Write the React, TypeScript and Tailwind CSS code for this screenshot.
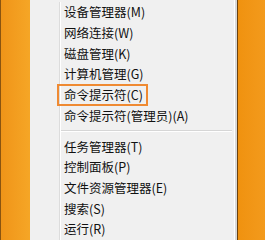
const items = [
  '设备管理器(M)',
  '网络连接(W)',
  '磁盘管理(K)',
  '计算机管理(G)',
  '命令提示符(C)',
  '命令提示符(管理员)(A)',
];

const items2 = ['任务管理器(T)', '控制面板(P)', '文件资源管理器(E)', '搜索(S)', '运行(R)'];

function Row({ label, boxed }: { label: string; boxed?: boolean }) {
  return (
    <div className="relative flex h-[21.5px] items-center">
      <div className="w-[29px] shrink-0" />
      <div className="h-full w-px bg-[#dcdcdc]" />
      <div className="h-full w-px bg-white" />
      <span className="pl-[3px] text-[12.5px] leading-none text-[#111] whitespace-nowrap">{label}</span>
      {boxed && (
        <div className="absolute left-[27px] top-[-1px] h-[22px] w-[91px] border-2 border-[#ef8a32]" />
      )}
    </div>
  );
}

export default function App() {
  return (
    <div
      className="flex h-[240px] w-[265px] overflow-hidden"
      style={{ fontFamily: '"Noto Sans CJK SC", "Noto Sans", sans-serif' }}
    >
      <div className="flex w-[30px] shrink-0">
        <div className="w-px bg-[#8a5410]" />
        <div className="flex-1 bg-gradient-to-r from-[#f09418] to-[#f5a626]" />
      </div>

      <div className="flex w-[204px] shrink-0 flex-col bg-[#f0f0f0] pt-[2px]">
        {items.map((t) => (
          <Row key={t} label={t} boxed={t === '命令提示符(C)'} />
        ))}
        <div className="flex h-[10.5px] items-center">
          <div className="w-[29px] shrink-0" />
          <div className="h-full w-px bg-[#dcdcdc]" />
          <div className="h-full w-px bg-white" />
          <div className="flex flex-1 flex-col pr-[2px]">
            <div className="h-px bg-[#d6d6d6]" />
            <div className="h-px bg-white" />
          </div>
        </div>
        {items2.map((t) => (
          <Row key={t} label={t} />
        ))}
      </div>

      <div className="w-px bg-white" />
      <div className="w-[2px] bg-[#d8d8d8]" />
      <div className="w-px bg-[#6b4210]" />
      <div className="flex-1 bg-gradient-to-r from-[#f0920f] to-[#f39a1c]" />
    </div>
  );
}
